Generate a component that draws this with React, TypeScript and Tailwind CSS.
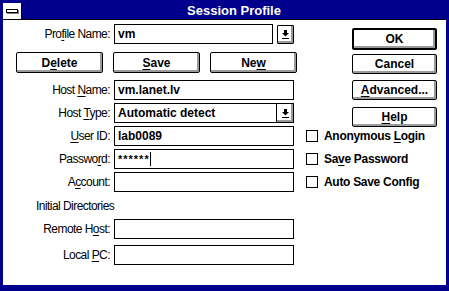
import React from 'react';

// Windows 3.1 style "Session Profile" dialog

const sans = "font-['Liberation_Sans',Arial,sans-serif]";

// Label text with one underlined mnemonic letter
const Mn = ({ pre, mn, post }: { pre: string; mn: string; post: string }) => (
  <>
    {pre}
    <span className="underline decoration-1 underline-offset-[2px]">{mn}</span>
    {post}
  </>
);

const DownArrow = () => (
  <svg width="7" height="9" viewBox="0 0 7 9" className="block">
    <rect x="2" y="0" width="3" height="3" fill="#000" />
    <polygon points="0,3 7,3 3.5,6.5" fill="#000" />
    <rect x="0" y="8" width="7" height="1" fill="#000" />
  </svg>
);

const PushButton = ({
  className,
  children,
}: {
  className: string;
  children: React.ReactNode;
}) => (
  <div
    className={`flex items-center justify-center bg-white border-black rounded-[2px] shadow-[inset_-2px_-2px_0_#9a9a9a] text-[12px] font-bold text-black ${className}`}
  >
    {children}
  </div>
);

const Label = ({ children }: { children: React.ReactNode }) => (
  <span className="w-[107px] shrink-0 text-right text-[12px] tracking-[-0.55px] text-black">
    {children}
  </span>
);

const Field = ({
  label,
  value,
  className,
}: {
  label: React.ReactNode;
  value?: React.ReactNode;
  className: string;
}) => (
  <div className={`flex h-[20px] items-center ${className}`}>
    <Label>{label}</Label>
    <div className="ml-[4px] flex h-[20px] w-[180px] items-center border border-black bg-white pl-[3px] text-[12px] font-bold text-black">
      {value}
    </div>
  </div>
);

const Checkbox = ({ label, className }: { label: React.ReactNode; className: string }) => (
  <div className={`flex h-[18px] items-center ${className}`}>
    <div className="ml-[6px] h-[12px] w-[12px] border border-black bg-white" />
    <span className="ml-[6px] text-[12px] font-bold tracking-[-0.3px] text-black">{label}</span>
  </div>
);

export default function App() {
  return (
    <div className={`flex h-[291px] w-[449px] flex-col bg-[#00008c] px-[3px] pb-[6px] pt-[3px] ${sans}`}>
      {/* Title bar */}
      <div className="flex h-[16px] shrink-0">
        <div className="flex w-[19px] items-center border-r border-black bg-white pl-[3px]">
          <div className="h-[4px] w-[12px] border border-black bg-white shadow-[1px_1px_0_#808080]" />
        </div>
        <div className="flex flex-1 items-center justify-center text-[13px] font-bold text-white">
          Session Profile
        </div>
      </div>
      <div className="h-[1px] shrink-0 bg-black" />

      {/* Client area */}
      <div className="flex flex-1 bg-white">
        {/* Left: form */}
        <div className="flex w-[297px] shrink-0 flex-col">
          <div className="mt-[4px] flex h-[20px] items-center">
            <Label>
              <Mn pre="Pro" mn="f" post="ile Name:" />
            </Label>
            <div className="ml-[4px] flex h-[20px] w-[159px] items-center border border-black bg-white pl-[3px] text-[12px] font-bold">
              vm
            </div>
            <div className="ml-[4px] flex h-[19px] w-[17px] items-center justify-center rounded-[1px] border border-black bg-white shadow-[inset_-2px_-2px_0_#9a9a9a]">
              <DownArrow />
            </div>
          </div>

          <div className="mt-[8px] flex h-[21px] gap-[10px] pl-[13px]">
            <PushButton className="w-[87px] border">
              <Mn pre="D" mn="e" post="lete" />
            </PushButton>
            <PushButton className="w-[87px] border">
              <Mn pre="" mn="S" post="ave" />
            </PushButton>
            <PushButton className="w-[87px] border">
              <Mn pre="Ne" mn="w" post="" />
            </PushButton>
          </div>

          <Field className="mt-[7px]" label={<Mn pre="Host " mn="N" post="ame:" />} value="vm.lanet.lv" />

          <div className="mt-[3px] flex h-[20px] items-center">
            <Label>
              <Mn pre="Host " mn="T" post="ype:" />
            </Label>
            <div className="ml-[4px] flex h-[20px] w-[180px] items-center border border-black bg-white text-[12px] font-bold">
              <span className="flex-1 pl-[3px]">Automatic detect</span>
              <div className="flex h-full w-[17px] items-center justify-center border-l border-black shadow-[inset_-2px_-2px_0_#9a9a9a]">
                <DownArrow />
              </div>
            </div>
          </div>

          <Field className="mt-[3px]" label={<Mn pre="" mn="U" post="ser ID:" />} value="lab0089" />
          <Field
            className="mt-[3px]"
            label={<Mn pre="Passwo" mn="r" post="d:" />}
            value={
              <>
                <span className="text-[11px] leading-none tracking-[1px]">******</span>
                <span className="h-[14px] w-[1px] bg-black" />
              </>
            }
          />
          <Field className="mt-[3px]" label={<Mn pre="A" mn="c" post="count:" />} />

          <div className="mt-[4px] flex h-[20px] items-center pl-[33px] text-[12px] tracking-[-0.55px]">
            Initial Directories
          </div>

          <Field className="mt-[3px]" label={<Mn pre="Remote H" mn="o" post="st:" />} />
          <Field className="mt-[6px]" label={<Mn pre="Local " mn="P" post="C:" />} />
        </div>

        {/* Right: buttons and options */}
        <div className="flex flex-1 flex-col">
          <PushButton className="ml-[52px] mt-[8px] h-[22px] w-[85px] border-2">OK</PushButton>
          <PushButton className="ml-[52px] mt-[4px] h-[20px] w-[85px] border">Cancel</PushButton>
          <PushButton className="ml-[52px] mt-[6px] h-[20px] w-[85px] border">
            <Mn pre="" mn="A" post="dvanced..." />
          </PushButton>
          <PushButton className="ml-[52px] mt-[7px] h-[20px] w-[85px] border">
            <Mn pre="" mn="H" post="elp" />
          </PushButton>

          <Checkbox className="mt-[0px]" label={<Mn pre="Anonymous " mn="L" post="ogin" />} />
          <Checkbox className="mt-[5px]" label={<Mn pre="Sa" mn="v" post="e Password" />} />
          <Checkbox className="mt-[5px]" label="Auto Save Config" />
        </div>
      </div>
    </div>
  );
}
